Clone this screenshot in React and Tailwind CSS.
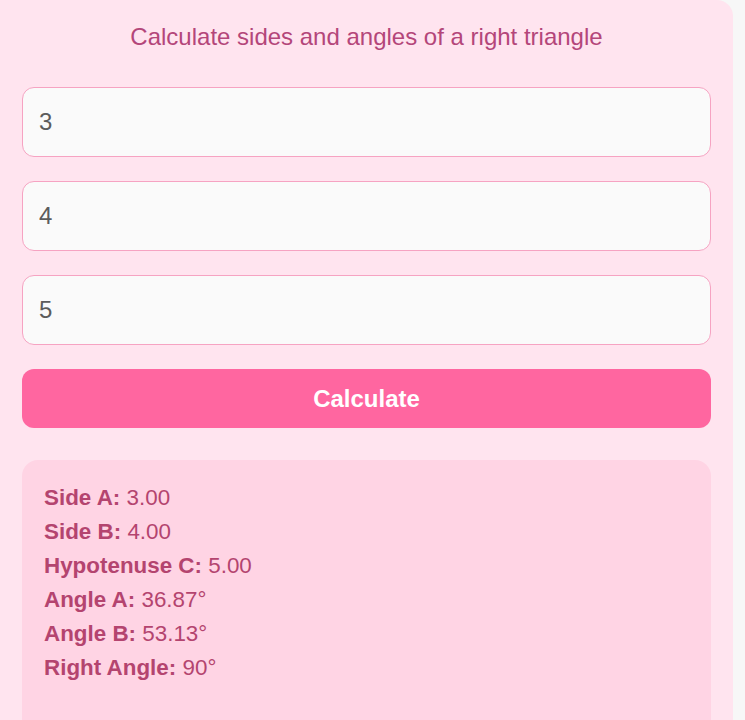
import { useState } from "react";

function App() {
    const [a, setA] = useState('3');
    const [b, setB] = useState('4');
    const [c, setC] = useState('5');
    const [result, setResult] = useState({ a: 3, b: 4, c: 5 });

    // Compute sides + angles
    const calculate = () => {
        let x = parseFloat(a), y = parseFloat(b), z = parseFloat(c);
        if (!z && x && y) z = Math.sqrt(x * x + y * y);
        if (!x && y && z) x = Math.sqrt(z * z - y * y);
        if (!y && x && z) y = Math.sqrt(z * z - x * x);
        setResult({ a: x, b: y, c: z });
    }

    const angleA = (Math.atan(result.a / result.b) * 180) / Math.PI;
    const angleB = 90 - angleA;

    const rows = [
        ['Side A:', result.a.toFixed(2)],
        ['Side B:', result.b.toFixed(2)],
        ['Hypotenuse C:', result.c.toFixed(2)],
        ['Angle A:', angleA.toFixed(2) + '°'],
        ['Angle B:', angleB.toFixed(2) + '°'],
        ['Right Angle:', '90°'],
    ];

    return (
        <div className="min-h-screen bg-[#f7f7f7] font-['Liberation_Sans',Arial,sans-serif]">

            <div className="w-[733px] min-h-screen bg-[#ffe4ef] rounded-tr-2xl px-[22px] pt-[23px]">

                <h1 className="text-center text-[24px] leading-[28px] text-[#b4467a] mb-[36px]">
                    Calculate sides and angles of a right triangle
                </h1>

                <div className="flex flex-col gap-6">
                    {[[a, setA], [b, setB], [c, setC]].map(([val, setVal], i) =>
                        <input
                            key={i}
                            type="text"
                            value={val}
                            onChange={(e) => setVal(e.target.value)}
                            className="h-[70px] w-full rounded-xl border border-[#f6a3c2] bg-[#fafafa] px-4 text-[24px] text-[#5c5c5c] outline-none"
                        />
                    )}

                    <button
                        onClick={calculate}
                        className="h-[59px] w-full rounded-xl bg-[#ff66a0] text-[24px] font-bold text-white">
                        Calculate
                    </button>
                </div>

                <div className="mt-8 rounded-2xl bg-[#ffd4e4] px-[22px] pt-[21px] pb-10 min-h-[280px]">
                    {rows.map(([label, value]) =>
                        <p key={label} className="text-[22.4px] leading-[34px] text-[#b4446f]">
                            <b className="font-bold">{label}</b> {value}
                        </p>
                    )}
                </div>

            </div>
        </div>
    )
}

export default App;
